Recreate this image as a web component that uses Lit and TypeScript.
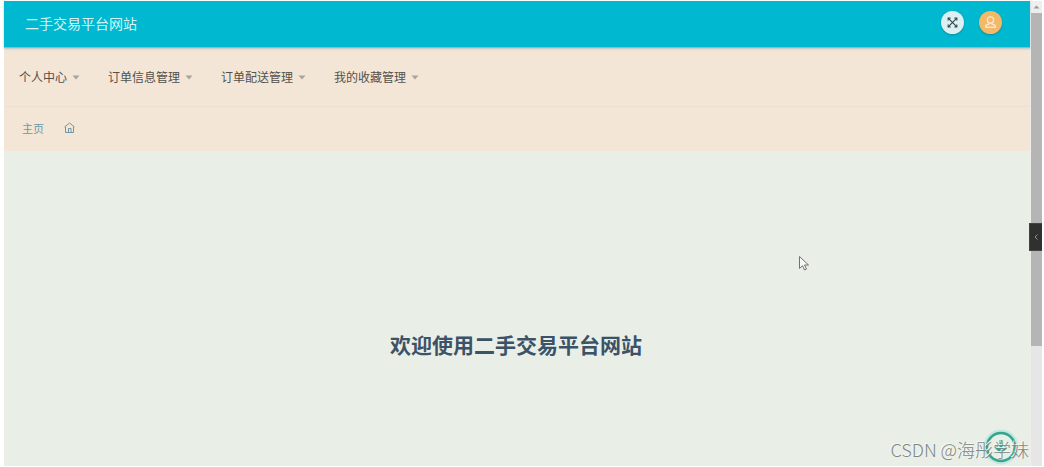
import { LitElement, html, css, svg } from "lit";
import { customElement, property } from "lit/decorators.js";

@customElement("nav-menu")
class NavMenu extends LitElement {
  @property({ type: Array }) items: string[] = [];

  static styles = css`
    :host {
      display: block;
    }
    .list {
      display: flex;
      gap: 28px;
      margin: 0;
      padding: 0;
      list-style: none;
    }
    .item {
      display: flex;
      align-items: center;
      gap: 5px;
      padding: 0;
      border: 0;
      background: none;
      color: #54504b;
      font: inherit;
      font-size: 12px;
      line-height: 20px;
      white-space: nowrap;
      cursor: pointer;
    }
    .caret {
      width: 8px;
      height: 5px;
      fill: #aaa49c;
    }
  `;

  render() {
    return html`<ul class="list">
      ${this.items.map(
        (label) => html`<li>
          <button class="item" type="button" aria-haspopup="true">
            ${label}<svg class="caret" viewBox="0 0 8 5" aria-hidden="true"><path d="M0.5 0.5h7L4 4.5z" /></svg>
          </button>
        </li>`
      )}
    </ul>`;
  }
}

@customElement("app-root")
class AppRoot extends LitElement {
  static styles = css`
    :host {
      display: block;
      box-sizing: border-box;
      min-height: 100vh;
      padding: 1px 2px 1px 4px;
      background: #fff;
      font-family: "Noto Sans CJK SC", sans-serif;
    }
    .window {
      position: relative;
      display: flex;
      min-height: calc(100vh - 2px);
    }
    .page {
      flex: 1;
      min-width: 0;
      display: flex;
      flex-direction: column;
      background: #e9eee6;
    }
    .header {
      display: flex;
      align-items: center;
      justify-content: space-between;
      padding: 8px 28px 12px 21px;
      background: #00b8cf;
      border-bottom: 1px solid #74c4d2;
      box-shadow: 0 1px 2px #b4c3c8;
      z-index: 1;
    }
    .title {
      margin: 0;
      padding: 4px 0 2px;
      color: #d5f3f3;
      font-size: 14px;
      font-weight: 400;
      line-height: 20px;
    }
    .actions {
      display: flex;
      gap: 15px;
    }
    .round {
      width: 23px;
      height: 23px;
      padding: 0;
      border: 0;
      border-radius: 50%;
      background: #dceff2;
      box-shadow: 0 1px 2px #0a8fa3;
      cursor: pointer;
    }
    .user {
      background: #f2b968;
    }
    .round svg {
      display: block;
      width: 23px;
      height: 23px;
    }
    .nav {
      padding: 19px 16px 19px 15px;
      background: #f3e6d6;
      border-bottom: 1px solid #e8e1d8;
    }
    .crumbs {
      display: flex;
      align-items: center;
      gap: 20px;
      padding: 11px 18px 13px;
      background: #f3e6d6;
      line-height: 20px;
    }
    .crumb {
      display: flex;
      color: #6d98a8;
      font-size: 11px;
      text-decoration: none;
    }
    .home {
      width: 11px;
      height: 12px;
    }
    .main {
      flex: 1;
      display: flex;
      align-items: center;
      justify-content: center;
      padding: 70px 2px 0 0;
    }
    .welcome {
      margin: 0;
      color: #3c5266;
      font-size: 21px;
      font-weight: 700;
      line-height: 32px;
    }
    .scrollbar {
      display: flex;
      flex-direction: column;
      width: 11px;
      background: #e6e6e6;
      border-left: 1px solid #efeee9;
    }
    .up {
      display: block;
      height: 12px;
      background: #eee;
    }
    .thumb {
      height: 74%;
      max-height: 333px;
      background: #b5b5b5;
    }
    .drawer {
      position: absolute;
      top: 222px;
      right: 0;
      width: 13px;
      height: 28px;
      padding: 0;
      border: 1px solid #444;
      border-right: 0;
      background: #303030;
    }
    .drawer svg {
      display: block;
      margin: auto;
    }
    .pointer {
      position: absolute;
      left: 794px;
      top: 254px;
    }
    .badge {
      position: absolute;
      right: 23px;
      bottom: 1px;
      width: 36px;
      height: 36px;
    }
    .mark {
      position: absolute;
      right: 13px;
      bottom: 5px;
      color: #7f8581;
      font-size: 18px;
      font-weight: 300;
      line-height: 24px;
      text-shadow: -1px -1px 0 #f7faf6;
      white-space: nowrap;
    }
  `;

  private expandIcon() {
    return svg`<svg viewBox="0 0 24 24" fill="none" stroke="#37464b" stroke-width="1.2" aria-hidden="true">
      <path d="M7.5 7.500l9 9M16.500 7.500l-9 9" />
      <path d="M7.500 10V7.500H10M14 7.500h2.500V10M16.500 14v2.500H14M10 16.500H7.500V14" />
    </svg>`;
  }

  private userIcon() {
    return svg`<svg viewBox="0 0 24 24" fill="none" stroke="#fae6c8" stroke-width="1.4" aria-hidden="true">
      <circle cx="12" cy="9.500" r="3.300" />
      <path d="M10.500 12.400v1.100L7 15v2h10v-2l-3.500-1.500v-1.100" />
    </svg>`;
  }

  render() {
    return html`
      <div class="window">
        <div class="page">
          <header class="header">
            <h1 class="title">二手交易平台网站</h1>
            <div class="actions">
              <button class="round" type="button" aria-label="全屏">${this.expandIcon()}</button>
              <button class="round user" type="button" aria-label="用户">${this.userIcon()}</button>
            </div>
          </header>
          <nav class="nav">
            <nav-menu .items=${["个人中心", "订单信息管理", "订单配送管理", "我的收藏管理"]}></nav-menu>
          </nav>
          <div class="crumbs">
            <a class="crumb" href="#">主页</a>
            <a class="crumb" href="#home" aria-label="首页">
              <svg class="home" viewBox="0 0 11 12" fill="none" stroke="#6d98a8" aria-hidden="true">
                <path d="M0.500 5L5.500 1l5 4M1.500 4.500v6h8v-6M4.500 10.500v-4h2.500v4" />
              </svg>
            </a>
          </div>
          <main class="main">
            <h2 class="welcome">欢迎使用二手交易平台网站</h2>
          </main>
        </div>
        <div class="scrollbar" aria-hidden="true">
          <svg class="up" viewBox="0 0 11 12"><path d="M2.500 7.500L5.500 4.500l3 3z" fill="#999" /></svg>
          <div class="thumb"></div>
        </div>
        <button class="drawer" type="button" aria-label="展开">
          <svg width="6" height="8" viewBox="0 0 6 8" fill="none" stroke="#929292"><path d="M4.500 1.500L2 4l2.500 2.500" /></svg>
        </button>
        <svg class="pointer" width="12" height="17" viewBox="0 0 12 17" aria-hidden="true">
          <path d="M1.500 1.500v12l3-2.800 2 4.300 2-.9-2-4.100h4z" fill="#f7f8f6" stroke="#6d7371" />
        </svg>
        <svg class="badge" viewBox="0 0 36 36" fill="none" stroke="#35a58c" aria-hidden="true">
          <circle cx="18" cy="18" r="15" stroke="#c4e7df" stroke-width="5" />
          <circle cx="18" cy="18" r="14" stroke-width="2.500" />
          <path d="M18 11v12M13 18l5 5 5-5" stroke-width="3" />
        </svg>
        <div class="mark">CSDN @海彤学妹</div>
      </div>
    `;
  }
}
